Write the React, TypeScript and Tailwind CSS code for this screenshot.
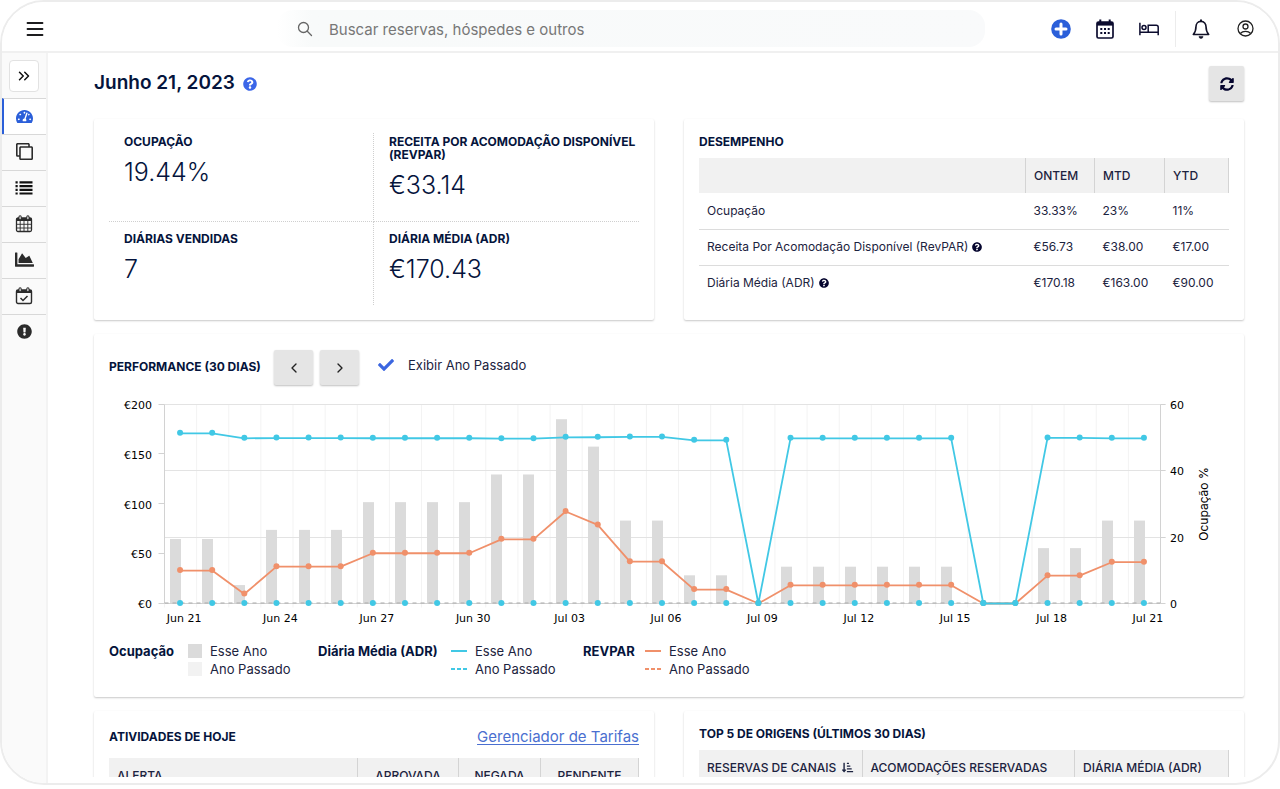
import type { ReactNode } from 'react';
import {
  FaTachometerAlt,
  FaRegClone,
  FaChartArea,
  FaExclamationCircle,
  FaQuestionCircle,
  FaSyncAlt,
  FaSortAmountDownAlt,
  FaCheck,
} from 'react-icons/fa';
import { ChevronLeft, ChevronRight, ChevronsRight } from 'lucide-react';

/* ---------- icons ---------- */

function MenuIcon() {
  return (
    <svg width="18" height="16" viewBox="0 0 18 16" stroke="#1d1d1f" strokeWidth="1.8" strokeLinecap="round">
      <path d="M1.500 2h15M1.500 8h15M1.500 14h15" />
    </svg>
  );
}

function SearchIcon() {
  return (
    <svg width="16" height="16" viewBox="0 0 16 16" fill="none" stroke="#666" strokeWidth="1.3" strokeLinecap="round">
      <circle cx="6.5" cy="6.5" r="5" />
      <path d="M10.3 10.3l4.2 4.2" />
    </svg>
  );
}

function PlusIcon() {
  return (
    <svg width="20" height="20" viewBox="0 0 20 20">
      <circle cx="10" cy="10" r="9.8" fill="#2b5fd9" />
      <path d="M10 5v10M5 10h10" stroke="#fff" strokeWidth="3" strokeLinecap="round" />
    </svg>
  );
}

function CalendarDotsIcon() {
  return (
    <svg width="18" height="20" viewBox="0 0 18 20" fill="#0b0b2e">
      <rect x="3.3" y="0.5" width="2" height="4" />
      <rect x="12.7" y="0.5" width="2" height="4" />
      <rect x="1" y="3" width="16" height="16" rx="1.5" fill="none" stroke="#0b0b2e" strokeWidth="1.7" />
      <rect x="1" y="3" width="16" height="3.6" />
      <path d="M4.3 9h2v2h-2zM8 9h2v2H8zM11.7 9h2v2h-2zM4.3 13h2v2h-2zM8 13h2v2H8zM11.7 13h2v2h-2z" />
    </svg>
  );
}

function BedIcon() {
  return (
    <svg width="20" height="14" viewBox="0 0 20 14" fill="none" stroke="#0b0b2e" strokeWidth="1.5">
      <path d="M0.9 0.8v12.4M0.9 10.2h18.3M19.2 13.2V5.2a2 2 0 0 0-2-2H9.2v7" />
      <circle cx="5" cy="5.6" r="2" />
    </svg>
  );
}

function BellIcon() {
  return (
    <svg width="18" height="20" viewBox="0 0 18 20" fill="none" stroke="#111127" strokeWidth="1.6" strokeLinejoin="round">
      <path d="M9 2.4c-3.2 0-5 2.4-5 5.2 0 4.600-1 6-2.700 7.900h15.400C15 13.600 14 12.200 14 7.600c0-2.800-1.800-5.200-5-5.200z" />
      <path d="M9 0.500v2" strokeWidth="2" />
      <path d="M7 17.400a2 2 0 0 0 4 0z" fill="#111127" strokeWidth="0.600" />
    </svg>
  );
}

function UserIcon() {
  return (
    <svg width="17" height="17" viewBox="0 0 17 17" fill="none" stroke="#222" strokeWidth="1.300">
      <circle cx="8.500" cy="8.500" r="7.500" />
      <circle cx="8.500" cy="6.500" r="2.500" />
      <path d="M3.300 13.500c1.400-1.600 3-2.200 5.200-2.200s3.800.600 5.200 2.200" />
    </svg>
  );
}

function ListIcon() {
  return (
    <svg width="18" height="14" viewBox="0 0 18 14" stroke="#111" strokeWidth="2.200">
      <path d="M0.500 1.400h2.200M4.500 1.400h13M0.500 5.100h2.200M4.500 5.100h13M0.500 8.800h2.200M4.500 8.800h13M0.500 12.500h2.200M4.500 12.500h13" />
    </svg>
  );
}

function CalendarGridIcon() {
  return (
    <svg width="18" height="18" viewBox="0 0 18 18" fill="none" stroke="#2b2b2b">
      <rect x="1.500" y="3" width="15" height="13.500" rx="1.500" strokeWidth="1.300" />
      <path d="M1.500 4.500h15" strokeWidth="3" />
      <path d="M1.500 9.300h15M1.500 13h15M5.200 6v10.500M9 6v10.500M12.800 6v10.500" strokeWidth="0.900" />
      <rect x="4" y="0.800" width="2.200" height="4" rx="1.100" fill="#fff" strokeWidth="1.100" />
      <rect x="11.800" y="0.800" width="2.200" height="4" rx="1.100" fill="#fff" strokeWidth="1.100" />
    </svg>
  );
}

function CalendarCheckIcon() {
  return (
    <svg width="18" height="18" viewBox="0 0 18 18" fill="none" stroke="#2b2b2b">
      <rect x="1.500" y="3" width="15" height="13.500" rx="1.500" strokeWidth="1.400" />
      <path d="M1.500 4.500h15" strokeWidth="3" />
      <path d="M5.500 11l2.500 2.500 4.500-4.500" strokeWidth="1.500" />
      <rect x="4" y="0.800" width="2.200" height="4" rx="1.100" fill="#fff" strokeWidth="1.100" />
      <rect x="11.800" y="0.800" width="2.200" height="4" rx="1.100" fill="#fff" strokeWidth="1.100" />
    </svg>
  );
}

/* ---------- shell ---------- */

function Header() {
  return (
    <header className="flex h-[51px] shrink-0 items-center border-b-2 border-[#f0f0f0] bg-white px-6 pt-1">
      <button aria-label="Menu" className="flex items-center">
        <MenuIcon />
      </button>
      <label className="mr-[66px] ml-[233px] flex h-[37px] flex-1 items-center gap-4 rounded-2xl bg-linear-to-r from-white via-[#f8fafa] via-5% to-[#f9fafb] pl-5">
        <SearchIcon />
        <input
          type="search"
          aria-label="Buscar"
          placeholder="Buscar reservas, hóspedes e outros"
          className="h-full flex-1 bg-transparent pt-0.5 text-[15px] outline-none placeholder:text-[#777]"
        />
      </label>
      <nav className="flex items-center">
        <button aria-label="Adicionar" className="mr-[25px]"><PlusIcon /></button>
        <button aria-label="Calendário" className="mr-[25px]"><CalendarDotsIcon /></button>
        <button aria-label="Acomodações" className="mr-4"><BedIcon /></button>
        <span className="mr-4 h-9 w-px bg-[#ececec]" />
        <button aria-label="Notificações" className="mr-[27px]"><BellIcon /></button>
        <button aria-label="Conta"><UserIcon /></button>
      </nav>
    </header>
  );
}

const navItems: { label: string; icon: ReactNode }[] = [
  { label: 'Painel', icon: <FaTachometerAlt size={17} color="#2b5fd9" /> },
  { label: 'Cópias', icon: <FaRegClone size={17} className="-scale-y-100" /> },
  { label: 'Lista', icon: <ListIcon /> },
  { label: 'Calendário', icon: <CalendarGridIcon /> },
  { label: 'Relatórios', icon: <FaChartArea size={19} /> },
  { label: 'Tarefas', icon: <CalendarCheckIcon /> },
  { label: 'Alertas', icon: <FaExclamationCircle size={15} /> },
];

function Sidebar() {
  return (
    <aside className="w-[46px] shrink-0 border-r-2 border-[#f3f3f3] bg-[#fafafa] text-[#2b2b2b]">
      <div className="flex h-[45px] items-center justify-center">
        <button aria-label="Expandir" className="flex h-8 w-[30px] items-center justify-center rounded border border-[#e2e2e2] bg-white">
          <ChevronsRight size={18} color="#111" strokeWidth={2} />
        </button>
      </div>
      <nav>
        {navItems.map((item, i) => (
          <a
            key={item.label}
            href="#"
            aria-label={item.label}
            className={
              i === 0
                ? 'flex h-9 items-center justify-center border-t border-l-2 border-t-[#d8d8d8] border-l-[#2b5fd9] bg-white pr-0.5'
                : 'flex h-9 items-center justify-center border-t border-[#d8d8d8] pb-0.5'
            }
          >
            {item.icon}
          </a>
        ))}
      </nav>
    </aside>
  );
}

function Card({ className, children }: { className: string; children: ReactNode }) {
  return (
    <section className={'rounded-xs bg-white shadow-[0_1px_2px_rgba(0,0,0,0.22)] ' + className}>{children}</section>
  );
}

/* ---------- top cards ---------- */

function Stat({ title, value, className }: { title: string; value: string; className: string }) {
  return (
    <div className={'border-dotted border-[#cfcfcf] pl-[15px] ' + className}>
      <h3 className="text-xs leading-[13px] font-bold">{title}</h3>
      <p className="mt-1.5 text-[25px] leading-9 font-light">{value}</p>
    </div>
  );
}

function StatsCard() {
  return (
    <Card className="px-[15px] pt-3.5 pb-[15px]">
      <div className="grid grid-cols-2 grid-rows-[89px_83px]">
        <Stat title="OCUPAÇÃO" value="19.44%" className="border-r border-b pt-0.5" />
        <Stat title="RECEITA POR ACOMODAÇÃO DISPONÍVEL (REVPAR)" value="€33.14" className="border-b pt-0.5" />
        <Stat title="DIÁRIAS VENDIDAS" value="7" className="border-r pt-2.5" />
        <Stat title="DIÁRIA MÉDIA (ADR)" value="€170.43" className="pt-2.5" />
      </div>
    </Card>
  );
}

const results = [
  { name: 'Ocupação', help: false, values: ['33.33%', '23%', '11%'] },
  { name: 'Receita Por Acomodação Disponível (RevPAR)', help: true, values: ['€56.73', '€38.00', '€17.00'] },
  { name: 'Diária Média (ADR)', help: true, values: ['€170.18', '€163.00', '€90.00'] },
];

function ResultsCard() {
  return (
    <Card className="px-[15px] pt-[15px]">
      <h2 className="text-xs leading-4 font-bold">DESEMPENHO</h2>
      <table className="mt-2 w-full table-fixed border-collapse text-left text-xs text-[#1c2340]">
        <colgroup>
          <col />
          <col className="w-[69px]" />
          <col className="w-[70px]" />
          <col className="w-[64px]" />
        </colgroup>
        <thead>
          <tr className="h-[35px] bg-[#f1f1f1]">
            <th aria-label="Indicador" />
            {['ONTEM', 'MTD', 'YTD'].map((h) => (
              <th key={h} className="border-x border-[#d4d4d4] px-2 font-medium">{h}</th>
            ))}
          </tr>
        </thead>
        <tbody>
          {results.map((row, i) => (
            <tr key={row.name} className={i < 2 ? 'h-9 border-b border-[#dcdcdc]' : 'h-9'}>
              <td className="px-2 whitespace-nowrap">
                <span className="flex items-center gap-1">
                  {row.name}
                  {row.help && <FaQuestionCircle size={10} color="#05052e" />}
                </span>
              </td>
              {row.values.map((v) => (
                <td key={v} className="px-2">{v}</td>
              ))}
            </tr>
          ))}
        </tbody>
      </table>
    </Card>
  );
}

/* ---------- chart ---------- */

const occupancy = [
  19.44, 19.44, 5.56, 22.2, 22.2, 22.2, 30.56, 30.56, 30.56, 30.56, 38.9, 38.9, 55.56, 47.3, 25, 25, 8.5, 8.5, 0,
  11.1, 11.1, 11.1, 11.1, 11.1, 11.1, 0, 0, 16.7, 16.7, 25, 25,
];
const adr = [
  171, 171, 166, 166.3, 166.3, 166.3, 166.1, 166.1, 166.1, 166.1, 165.7, 165.7, 167, 167.1, 167.4, 167.4, 164, 164, 0,
  166, 166, 166, 166, 166, 166, 0, 0, 166.4, 166.4, 166, 166,
];
const revpar = [
  33.14, 33.14, 9.5, 37, 37, 37, 50.5, 50.5, 50.5, 50.5, 64.5, 64.5, 92.5, 79, 42, 42, 14, 14, 0, 18.3, 18.3, 18.3,
  18.3, 18.3, 18.3, 0, 0, 28, 28, 41.5, 41.5,
];
const dates = ['Jun 21', 'Jun 24', 'Jun 27', 'Jun 30', 'Jul 03', 'Jul 06', 'Jul 09', 'Jul 12', 'Jul 15', 'Jul 18', 'Jul 21'];

const LEFT = 55.5;
const RIGHT = 1051.5;
const TOP = 8.5;
const BOTTOM = 207.5;
const BAND = (RIGHT - LEFT) / 31;
const cx = (i: number) => LEFT - 0.5 + BAND * (i + 0.5);
const yMoney = (v: number) => BOTTOM - (v / 200) * (BOTTOM - TOP);
const yPercent = (v: number) => BOTTOM - (v / 60) * (BOTTOM - TOP);

function Series({ data, color }: { data: number[]; color: string }) {
  return (
    <g>
      <polyline
        points={data.map((v, i) => `${cx(i)},${yMoney(v)}`).join(' ')}
        fill="none"
        stroke={color}
        strokeWidth="1.8"
        strokeLinejoin="round"
      />
      {data.map((v, i) => (
        <circle key={i} cx={cx(i)} cy={yMoney(v) - 0.5} r="3" fill={color} />
      ))}
    </g>
  );
}

function Chart() {
  return (
    <svg viewBox="0 0 1120 232" className="mt-[11px] block w-full font-['DejaVu_Sans',sans-serif] text-[11px]">
      {occupancy.map((_, i) => (
        <path key={i} d={`M${LEFT + BAND * i} ${TOP}V${BOTTOM + 4}`} stroke="#f3f3f3" />
      ))}
      {[20, 40, 60].map((v) => (
        <path key={v} d={`M${LEFT} ${Math.floor(yPercent(v)) + 0.5}H${RIGHT + 5}`} stroke="#e3e3e3" />
      ))}
      {occupancy.map((v, i) => (
        <rect key={i} x={Math.round(cx(i) - 10)} y={yPercent(v)} width="11" height={BOTTOM - yPercent(v)} fill="#dbdbdb" />
      ))}
      <path d={`M${LEFT} ${TOP}V${BOTTOM}H${RIGHT}V${TOP}`} fill="none" stroke="#d2d2d2" />
      <path d={`M${LEFT} ${BOTTOM - 0.5}H${RIGHT}`} stroke="#a9a9a9" strokeDasharray="4 4" />
      {[0, 50, 100, 150, 200].map((v) => (
        <g key={v}>
          <path d={`M${LEFT - 6} ${Math.round(yMoney(v)) - 0.5}H${LEFT}`} stroke="#d2d2d2" />
          <text x="43" y={yMoney(v) + 4.5} textAnchor="end">{`€${v}`}</text>
        </g>
      ))}
      {[0, 20, 40, 60].map((v) => (
        <g key={v}>
          <path d={`M${RIGHT} ${Math.floor(yPercent(v)) + 0.5}H${RIGHT + 5}`} stroke="#d2d2d2" />
          <text x="1061" y={yPercent(v) + 4.5}>{v}</text>
        </g>
      ))}
      {dates.map((d, i) => (
        <text key={d} x={cx(i * 3) + 4} y="226" textAnchor="middle">{d}</text>
      ))}
      <text
        transform="translate(1099 108) rotate(-90)"
        textAnchor="middle"
        className="font-['Inter',sans-serif] text-xs"
      >
        Ocupação %
      </text>
      <Series data={revpar} color="#f0906a" />
      <Series data={adr} color="#41c8e5" />
      {occupancy.map((_, i) => (
        <circle key={i} cx={cx(i)} cy={BOTTOM - 0.5} r="3" fill="#41c8e5" />
      ))}
    </svg>
  );
}

function LineKey({ color, dashed }: { color: string; dashed: boolean }) {
  return (
    <svg width="16" height="2" viewBox="0 0 16 2" className="shrink-0">
      <path d="M0 1h16" stroke={color} strokeWidth="2" strokeDasharray={dashed ? '4 2' : undefined} />
    </svg>
  );
}

function LegendGroup({ title, titleClass, className, thisYear, lastYear }: {
  title: string;
  titleClass: string;
  className: string;
  thisYear: ReactNode;
  lastYear: ReactNode;
}) {
  return (
    <div className={'flex text-[13px] leading-[18px] ' + className}>
      <h4 className={'font-bold whitespace-nowrap ' + titleClass}>{title}</h4>
      <ul className="text-[#1c2340]">
        <li className="flex items-center gap-2">{thisYear}Esse Ano</li>
        <li className="flex items-center gap-2">{lastYear}Ano Passado</li>
      </ul>
    </div>
  );
}

function PerformanceCard() {
  const pager = 'flex h-[35px] w-[39px] items-center justify-center rounded-xs bg-[#e5e5e5] shadow-[0_1px_2px_rgba(0,0,0,0.25)]';
  return (
    <Card className="mt-3.5 px-[15px] pt-4 pb-[19px]">
      <div className="flex items-center">
        <h2 className="w-[165px] pb-0.5 text-xs font-bold whitespace-nowrap">PERFORMANCE (30 DIAS)</h2>
        <button aria-label="Anterior" className={pager}><ChevronLeft size={16} color="#222" /></button>
        <button aria-label="Próximo" className={pager + ' ml-[7px]'}><ChevronRight size={16} color="#222" /></button>
        <label className="ml-[19px] flex items-center gap-3.5 pb-1.5 text-[13px] leading-4 text-[#1c2340]">
          <span className="grid size-4 place-items-center">
            <input type="checkbox" defaultChecked className="peer col-start-1 row-start-1 size-4 appearance-none" />
            <FaCheck size={16} color="#3b66e0" className="pointer-events-none invisible col-start-1 row-start-1 peer-checked:visible" />
          </span>
          Exibir Ano Passado
        </label>
      </div>
      <Chart />
      <div className="mt-3.5 flex">
        <LegendGroup
          title="Ocupação"
          titleClass="w-[79px]"
          className="w-[209px]"
          thisYear={<span className="size-3.5 bg-[#dbdbdb]" />}
          lastYear={<span className="size-3.5 bg-[#f2f2f2]" />}
        />
        <LegendGroup
          title="Diária Média (ADR)"
          titleClass="w-[133px]"
          className="w-[265px]"
          thisYear={<LineKey color="#41c8e5" dashed={false} />}
          lastYear={<LineKey color="#41c8e5" dashed />}
        />
        <LegendGroup
          title="REVPAR"
          titleClass="w-[62px]"
          className=""
          thisYear={<LineKey color="#f0906a" dashed={false} />}
          lastYear={<LineKey color="#f0906a" dashed />}
        />
      </div>
    </Card>
  );
}

/* ---------- bottom cards ---------- */

function ActivitiesCard() {
  return (
    <Card className="px-[15px] pt-4">
      <div className="flex items-center justify-between">
        <h2 className="text-xs font-bold">ATIVIDADES DE HOJE</h2>
        <a href="#" className="text-[15px] leading-5 text-[#4a6fd0] underline underline-offset-2">Gerenciador de Tarifas</a>
      </div>
      <table className="mt-[11px] w-full table-fixed border-collapse text-xs text-[#1c2340]">
        <colgroup>
          <col />
          <col className="w-[101px]" />
          <col className="w-[82px]" />
          <col className="w-[98px]" />
        </colgroup>
        <thead>
          <tr className="h-[35px] bg-[#f1f1f1]">
            <th className="px-2 text-left font-medium">ALERTA</th>
            <th className="border-x border-[#d4d4d4] font-medium">APROVADA</th>
            <th className="border-x border-[#d4d4d4] font-medium">NEGADA</th>
            <th className="border-x border-[#d4d4d4] font-medium">PENDENTE</th>
          </tr>
        </thead>
      </table>
    </Card>
  );
}

function OriginsCard() {
  return (
    <Card className="px-[15px] pt-[15px]">
      <h2 className="text-xs leading-4 font-bold">TOP 5 DE ORIGENS (ÚLTIMOS 30 DIAS)</h2>
      <table className="mt-2 w-full table-fixed border-collapse text-left text-xs whitespace-nowrap text-[#1c2340]">
        <colgroup>
          <col className="w-[163px]" />
          <col />
          <col className="w-[154px]" />
        </colgroup>
        <thead>
          <tr className="h-[35px] bg-[#f1f1f1]">
            <th className="px-2 font-medium">
              <span className="flex items-center gap-1.5">
                RESERVAS DE CANAIS
                <FaSortAmountDownAlt size={13} />
              </span>
            </th>
            <th className="border-x border-[#d4d4d4] px-2 font-medium">ACOMODAÇÕES RESERVADAS</th>
            <th className="border-x border-[#d4d4d4] px-2 font-medium">DIÁRIA MÉDIA (ADR)</th>
          </tr>
        </thead>
      </table>
    </Card>
  );
}

export default function App() {
  return (
    <div className="h-screen bg-white pb-1 font-['Inter',sans-serif] text-[#05143c]">
      <div className="flex h-full flex-col overflow-hidden rounded-[44px] border-2 border-[#ececec] bg-white">
        <Header />
        <div className="flex min-h-0 flex-1">
          <Sidebar />
          <div className="flex min-w-0 flex-1 flex-col pb-1.5">
            <main className="min-h-0 flex-1 overflow-hidden pr-[34px] pl-[46px]">
              <div className="flex items-center justify-between pt-[13px]">
                <h1 className="flex items-center gap-2 text-[19px] font-semibold">
                  Junho 21, 2023
                  <FaQuestionCircle size={14} color="#3b66e8" />
                </h1>
                <button aria-label="Atualizar" className="flex size-[35px] items-center justify-center rounded-xs bg-[#e5e5e5] shadow-[0_1px_2px_rgba(0,0,0,0.25)]">
                  <FaSyncAlt size={14} color="#05052e" />
                </button>
              </div>
              <div className="mt-[18px] grid grid-cols-2 gap-[30px]">
                <StatsCard />
                <ResultsCard />
              </div>
              <PerformanceCard />
              <div className="mt-3.5 grid grid-cols-2 gap-[30px]">
                <ActivitiesCard />
                <OriginsCard />
              </div>
            </main>
          </div>
        </div>
      </div>
    </div>
  );
}
